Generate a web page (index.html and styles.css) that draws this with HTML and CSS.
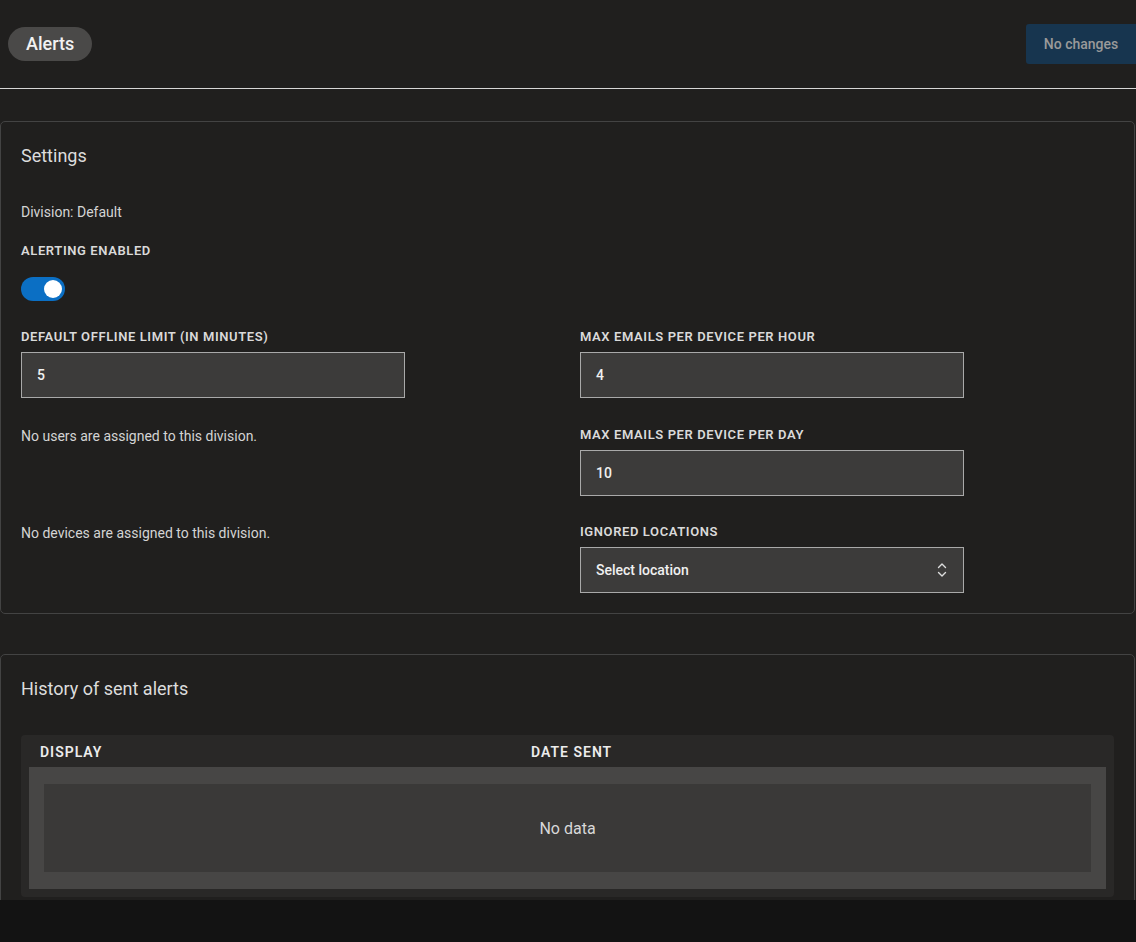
FILE: index.html
```html
<!DOCTYPE html>
<html lang="en">
<head>
<meta charset="utf-8">
<title>Alerts</title>
<link rel="stylesheet" href="styles.css">
</head>
<body>
<div class="app">
  <header class="topbar">
    <span class="pill">Alerts</span>
    <button class="save" disabled>No changes</button>
  </header>

  <section class="card settings">
    <h2 class="card-title">Settings</h2>
    <p class="division">Division: Default</p>
    <div class="label">Alerting enabled</div>
    <div class="toggle"><span class="knob"></span></div>

    <div class="grid">
      <div class="col">
        <div class="field">
          <div class="label">Default offline limit (in minutes)</div>
          <div class="input">5</div>
        </div>
        <p class="note users">No users are assigned to this division.</p>
        <p class="note devices">No devices are assigned to this division.</p>
      </div>
      <div class="col">
        <div class="field">
          <div class="label">Max emails per device per hour</div>
          <div class="input">4</div>
        </div>
        <div class="field">
          <div class="label">Max emails per device per day</div>
          <div class="input">10</div>
        </div>
        <div class="field tight">
          <div class="label">Ignored locations</div>
          <div class="input select">
            <span>Select location</span>
            <svg class="chev" width="12" height="16" viewBox="0 0 12 16" fill="none" stroke="#ddd" stroke-width="1.4" stroke-linecap="round" stroke-linejoin="round"><path d="M2.5 5.5 6 2l3.5 3.5"/><path d="M2.5 10.5 6 14l3.5-3.5"/></svg>
          </div>
        </div>
      </div>
    </div>
  </section>

  <section class="card history">
    <h2 class="card-title">History of sent alerts</h2>
    <div class="table">
      <div class="thead">
        <div class="th">Display</div>
        <div class="th">Date sent</div>
      </div>
      <div class="tbody">
        <div class="empty">No data</div>
      </div>
    </div>
  </section>
</div>
<div class="bottom"></div>
</body>
</html>
```

FILE: styles.css
```css
* { box-sizing: border-box; }
html, body { margin: 0; padding: 0; }
body {
  background: #131313;
  font-family: Roboto, "Noto Sans", sans-serif;
  color: #e0e0e0;
}
.app {
  height: 900px;
  overflow: hidden;
  background: #201f1e;
}
.bottom { height: 42px; background: #131313; }

.topbar {
  height: 89px;
  display: flex;
  align-items: center;
  justify-content: space-between;
  padding-left: 8px;
  border-bottom: 1px solid #d6d6d6;
}
.pill {
  height: 34px;
  padding: 0 18px;
  display: inline-flex;
  align-items: center;
  border-radius: 17px;
  background: #4a4948;
  color: #f2f2f2;
  font-size: 18px;
  font-weight: 500;
  margin-bottom: 1px;
}
.save {
  height: 40px;
  width: 110px;
  border: none;
  border-radius: 3px 0 0 3px;
  background: #17354f;
  color: #9a9a9a;
  font-family: inherit;
  font-size: 14px;
  font-weight: 500;
  margin-bottom: 1px;
}

.card {
  border: 1px solid #434343;
  border-radius: 5px;
  margin-right: 1px;
  padding: 20px;
}
.settings { margin-top: 32px; }
.history { margin-top: 40px; }

.card-title {
  margin: 0;
  font-size: 18px;
  font-weight: 400;
  color: #dcdcdc;
  line-height: 28px;
}
.division {
  margin: 33px 0 0;
  font-size: 14px;
  line-height: 18px;
  color: #d4d4d4;
}
.label {
  font-size: 13px;
  font-weight: 600;
  text-transform: uppercase;
  letter-spacing: 0.6px;
  color: #dadada;
  line-height: 16px;
}
.division + .label { margin-top: 22px; }
.toggle {
  margin-top: 18px;
  width: 44px;
  height: 24px;
  border-radius: 12px;
  background: #0b6fc4;
  position: relative;
}
.knob {
  position: absolute;
  right: 3px;
  top: 3px;
  width: 18px;
  height: 18px;
  border-radius: 50%;
  background: #fff;
}

.grid {
  margin-top: 28px;
  display: grid;
  grid-template-columns: 559px 1fr;
}
.col { display: flex; flex-direction: column; }
.field { display: flex; flex-direction: column; gap: 7px; }
.field + .field { margin-top: 29px; }
.field + .field.tight { margin-top: 28px; }
.input {
  width: 384px;
  height: 46px;
  background: #3c3b3a;
  border: 1px solid #a9a9a9;
  display: flex;
  align-items: center;
  padding: 0 15px;
  font-size: 14px;
  font-weight: 500;
  color: #f0f0f0;
}
.select { justify-content: space-between; padding-right: 15px; }
.chev { display: block; }

.note {
  margin: 0;
  font-size: 14px;
  line-height: 18px;
  color: #d4d4d4;
}
.users { margin-top: 29px; }
.devices { margin-top: 79px; }

.table {
  margin-top: 32px;
  background: #292827;
  border-radius: 4px;
  padding: 0 8px 8px;
}
.thead {
  height: 32px;
  display: grid;
  grid-template-columns: 491px 1fr;
  align-items: center;
  padding-left: 11px;
  padding-top: 2px;
}
.th {
  font-size: 14px;
  font-weight: 600;
  text-transform: uppercase;
  letter-spacing: 1px;
  color: #ececec;
}
.tbody {
  background: #474645;
  padding: 17px 15px;
}
.empty {
  height: 88px;
  background: #3a3938;
  display: flex;
  align-items: center;
  justify-content: center;
  font-size: 16px;
  color: #d8d8d8;
}
```
